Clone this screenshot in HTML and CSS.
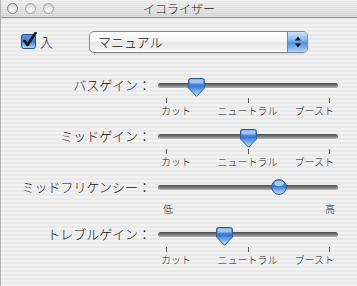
FILE: index.html
```html
<!DOCTYPE html>
<html lang="ja">
<head>
<meta charset="utf-8">
<title>イコライザー</title>
<link rel="stylesheet" href="styles.css">
</head>
<body>
<div class="window">
  <div class="titlebar">
    <div class="lights">
      <span class="light first"></span>
      <span class="light"></span>
      <span class="light"></span>
    </div>
    <div class="title">イコライザー</div>
    <div></div>
  </div>
  <div class="content">
    <div class="top-row">
      <label class="check">
        <svg class="checkbox" width="16" height="17" viewBox="0 0 16 17">
          <defs>
            <linearGradient id="cb" x1="0" y1="0" x2="0" y2="1">
              <stop offset="0" stop-color="#5a95e0"/>
              <stop offset="0.5" stop-color="#3b7fdc"/>
              <stop offset="1" stop-color="#b8dcff"/>
            </linearGradient>
          </defs>
          <rect x="0.5" y="2.5" width="14" height="14" rx="2" fill="url(#cb)" stroke="#2c4f86"/>
          <path d="M3.5 9 L6.5 13 L14.5 1" fill="none" stroke="#111" stroke-width="2.6" stroke-linecap="round" stroke-linejoin="round"/>
        </svg>
        <span>入</span>
      </label>
      <div class="popup">
        <span class="popup-text">マニュアル</span>
        <span class="popup-arrows">
          <svg width="8" height="12" viewBox="0 0 8 12"><path d="M4 0.5 L7 4.5 H1 Z M4 11.5 L7 7.5 H1 Z" fill="#111"/></svg>
        </span>
      </div>
    </div>

    <div class="sliders">
      <div class="row-label">バスゲイン：</div>
      <div class="slider">
        <div class="rail">
          <div class="track"></div>
          <svg class="thumb pointer" style="--v:0.183" width="17" height="19" viewBox="0 0 17 19"><use href="#ptr"/></svg>
        </div>
        <div class="ticks"><i></i><i></i><i></i></div>
        <div class="labels"><span>カット</span><span>ニュートラル</span><span class="end">ブースト</span></div>
      </div>

      <div class="row-label">ミッドゲイン：</div>
      <div class="slider">
        <div class="rail">
          <div class="track"></div>
          <svg class="thumb pointer" style="--v:0.506" width="17" height="19" viewBox="0 0 17 19"><use href="#ptr"/></svg>
        </div>
        <div class="ticks"><i></i><i></i><i></i></div>
        <div class="labels"><span>カット</span><span>ニュートラル</span><span class="end">ブースト</span></div>
      </div>

      <div class="row-label">ミッドフリケンシー：</div>
      <div class="slider">
        <div class="rail">
          <div class="track"></div>
          <svg class="thumb round" style="--v:0.689" width="16" height="16" viewBox="0 0 16 16">
            <circle cx="8" cy="8" r="7.4" fill="url(#tg)" stroke="#34598c" stroke-width="1"/>
            <ellipse cx="8" cy="4.6" rx="4.6" ry="2.6" fill="#ffffff" opacity="0.55"/>
          </svg>
        </div>
        <div class="labels wide"><span>低</span><span></span><span class="end">高</span></div>
      </div>

      <div class="row-label">トレブルゲイン：</div>
      <div class="slider">
        <div class="rail">
          <div class="track"></div>
          <svg class="thumb pointer" style="--v:0.354" width="17" height="19" viewBox="0 0 17 19"><use href="#ptr"/></svg>
        </div>
        <div class="ticks"><i></i><i></i><i></i></div>
        <div class="labels"><span>カット</span><span>ニュートラル</span><span class="end">ブースト</span></div>
      </div>
    </div>
  </div>

  <svg class="defs" width="0" height="0">
    <defs>
      <linearGradient id="tg" x1="0" y1="0" x2="0" y2="1">
        <stop offset="0" stop-color="#6f9fdc"/>
        <stop offset="0.45" stop-color="#3a7ad6"/>
        <stop offset="0.8" stop-color="#8ec3f5"/>
        <stop offset="1" stop-color="#c9e6ff"/>
      </linearGradient>
      <g id="ptr">
        <path d="M2.5 0.5 H14.5 A2 2 0 0 1 16.5 2.5 V10 L8.5 18.3 L0.5 10 V2.5 A2 2 0 0 1 2.5 0.5 Z" fill="url(#tg)" stroke="#34598c" stroke-width="1"/>
        <path d="M3 1.6 H14 A1.4 1.4 0 0 1 15.2 3 V5.6 H1.8 V3 A1.4 1.4 0 0 1 3 1.6 Z" fill="#ffffff" opacity="0.45"/>
      </g>
    </defs>
  </svg>
</div>
</body>
</html>
```

FILE: styles.css
```css
html, body {
  margin: 0;
  padding: 0;
}

body {
  width: 357px;
  height: 286px;
  overflow: hidden;
  font-family: "Noto Sans CJK JP", "Noto Sans", sans-serif;
  font-weight: 300;
  color: #111;
}

.window {
  width: 357px;
  height: 286px;
  box-sizing: border-box;
  border-left: 1px solid #b0b0b0;
  background: repeating-linear-gradient(to bottom, #f1f1f1 0 2px, #e9e9e9 2px 4px);
  position: relative;
}

.titlebar {
  height: 17px;
  display: grid;
  grid-template-columns: 1fr auto 1fr;
  align-items: center;
  border-bottom: 1px solid #8e8e8e;
  background:
    repeating-linear-gradient(to bottom, rgba(255,255,255,0.25) 0 1px, rgba(0,0,0,0) 1px 2px),
    linear-gradient(to bottom, #ececec, #d2d2d2);
}

.lights {
  display: flex;
  gap: 7px;
  padding-left: 6px;
}

.light {
  width: 11px;
  height: 11px;
  box-sizing: border-box;
  border-radius: 50%;
  border: 1px solid #a5a5a5;
  background: radial-gradient(circle at 50% 75%, #fbfbfb 0, #e2e2e2 55%, #c9c9c9 100%);
}

.light.first {
  border-color: #7c7c7c;
}

.title {
  font-size: 12px;
  line-height: 17px;
  color: #222;
}

.content {
  padding-top: 13px;
}

.top-row {
  display: flex;
  align-items: center;
  height: 22px;
}

.check {
  display: flex;
  align-items: center;
  gap: 3px;
  width: 68px;
  padding-left: 20px;
  font-size: 13px;
  line-height: 16px;
}

.checkbox {
  display: block;
  margin-top: -4px;
}

.popup {
  width: 219px;
  height: 22px;
  box-sizing: border-box;
  display: flex;
  align-items: center;
  border: 1px solid #8a8a8a;
  border-radius: 5px;
  background: linear-gradient(to bottom, #ffffff 0%, #f4f4f4 45%, #e6e6e6 55%, #fbfbfb 100%);
  box-shadow: 0 1px 1px rgba(0,0,0,0.12);
  overflow: hidden;
}

.popup-text {
  flex: 1;
  padding-left: 8px;
  font-size: 13px;
  line-height: 20px;
}

.popup-arrows {
  width: 19px;
  height: 100%;
  display: flex;
  align-items: center;
  justify-content: center;
  border-left: 1px solid #5f88bf;
  background: linear-gradient(to bottom, #cfe3fa 0%, #86b6ec 40%, #4f8fe0 55%, #a9d4fb 100%);
}

.popup-arrows svg {
  display: block;
}

.sliders {
  display: grid;
  grid-template-columns: 150px 180px;
  column-gap: 7px;
  row-gap: 9px;
  margin-top: 22px;
}

.row-label {
  font-size: 13px;
  line-height: 20px;
  height: 20px;
  text-align: right;
  white-space: nowrap;
}

.slider {
  display: flex;
  flex-direction: column;
}

.rail {
  position: relative;
  height: 20px;
  display: flex;
  align-items: center;
}

.track {
  width: 100%;
  height: 5px;
  border-radius: 3px;
  background: linear-gradient(to bottom, #4d4d4d 0%, #7a7a7a 50%, #b3b3b3 100%);
  box-shadow: 0 1px 0 rgba(255,255,255,0.6);
}

.thumb {
  position: absolute;
  display: block;
}

.thumb.pointer {
  top: 3px;
  left: calc(var(--v) * 164px - 0.5px);
}

.thumb.round {
  top: 2px;
  left: calc(var(--v) * 164px);
}

.ticks {
  display: flex;
  justify-content: space-between;
  height: 5px;
  margin-top: 3px;
  padding: 0 8px;
}

.ticks i {
  display: block;
  width: 1px;
  height: 5px;
  background: #555;
}

.labels {
  display: grid;
  grid-template-columns: 1fr auto 1fr;
  margin-top: 2px;
  padding: 0 4px 0 3px;
  font-size: 10px;
  line-height: 12px;
  color: #222;
}

.labels.wide {
  margin-top: 6px;
  padding: 0 3px 0 5px;
}

.labels .end {
  text-align: right;
}

.defs {
  position: absolute;
  width: 0;
  height: 0;
}
```
